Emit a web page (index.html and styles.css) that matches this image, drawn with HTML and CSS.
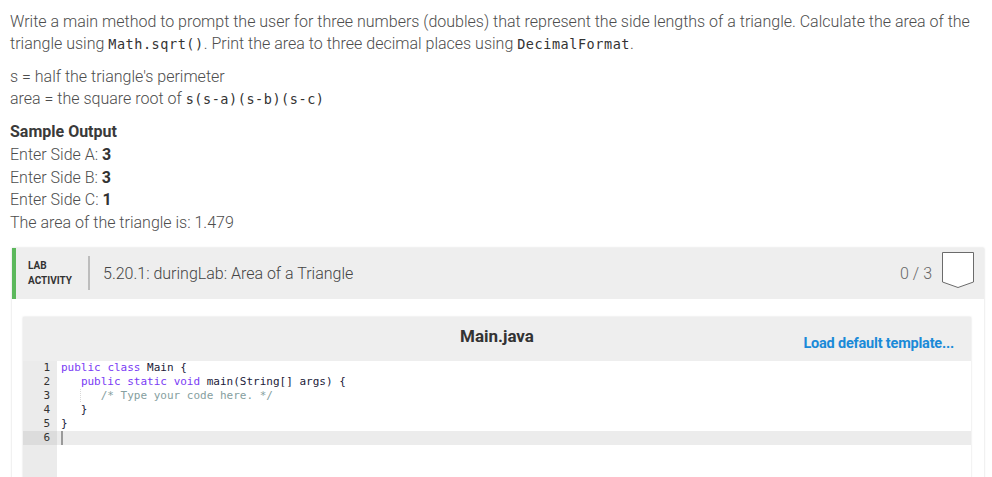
FILE: index.html
```html
<!DOCTYPE html>
<html>
<head>
<meta charset="utf-8">
<link rel="stylesheet" href="styles.css">
</head>
<body>
<div class="page">
  <p class="para">Write a main method to prompt the user for three numbers (doubles) that represent the side lengths of a triangle. Calculate the area of the triangle using <code>Math.sqrt()</code>. Print the area to three decimal places using <code>DecimalFormat</code>.</p>
  <p class="para">s = half the triangle's perimeter<br>area = the square root of <code>s(s-a)(s-b)(s-c)</code></p>
  <div class="sample">
    <div class="sample-title">Sample Output</div>
    <div>Enter Side A: <b>3</b></div>
    <div>Enter Side B: <b>3</b></div>
    <div>Enter Side C: <b>1</b></div>
    <div>The area of the triangle is: 1.479</div>
  </div>

  <div class="lab">
    <div class="lab-head">
      <div class="lab-label">LAB<br>ACTIVITY</div>
      <div class="lab-divider"></div>
      <div class="lab-title">5.20.1: duringLab: Area of a Triangle</div>
      <div class="lab-score">0 / 3</div>
      <svg class="badge" width="33" height="37" viewBox="0 0 33 37">
        <path d="M1.5 0.5 H32.5 V30 L17 35.5 L1.5 30 Z" fill="#fff" stroke="#6b6b6b" stroke-width="1"/>
      </svg>
    </div>
    <div class="lab-body">
      <div class="panel">
        <div class="panel-head">
          <div class="file-name">Main.java</div>
          <a class="load-link">Load default template...</a>
        </div>
        <div class="editor">
          <div class="gutter">
            <div class="ln">1</div>
            <div class="ln">2</div>
            <div class="ln">3</div>
            <div class="ln">4</div>
            <div class="ln">5</div>
            <div class="ln active">6</div>
          </div>
          <div class="code">
            <div class="cl"><span class="kw">public</span> <span class="kw">class</span> Main {</div>
            <div class="cl">   <span class="kw">public</span> <span class="kw">static</span> <span class="kw">void</span> main(String[] args) {</div>
            <div class="cl"><span class="guide">   </span>   <span class="cm">/* Type your code here. */</span></div>
            <div class="cl">   }</div>
            <div class="cl">}</div>
            <div class="cl active"><span class="cursor"></span></div>
          </div>
        </div>
      </div>
    </div>
  </div>
</div>
</body>
</html>
```

FILE: styles.css
```css
html, body {
  margin: 0;
  padding: 0;
  background: #fff;
}

body {
  font-family: Roboto, "Liberation Sans", sans-serif;
  font-weight: 300;
  color: #4d4d4d;
  overflow: hidden;
}

.page {
  padding: 11px 8px 0 10px;
}

.para {
  margin: 0 0 11px 0;
  font-size: 16px;
  line-height: 22px;
}

code {
  font-family: "DejaVu Sans Mono", "Liberation Mono", monospace;
  font-size: 13.5px;
  letter-spacing: 0.55px;
  line-height: 1;
  font-weight: normal;
  color: #333;
}

.sample {
  font-size: 16px;
  line-height: 22.8px;
  margin-top: 11px;
}

.sample-title {
  font-weight: 700;
  color: #3a3a3a;
}

.sample b {
  font-weight: 700;
  color: #333;
}

.lab {
  margin: 13px 0 0 2px;
  background: #fff;
  box-shadow: 0 0 2px rgba(0, 0, 0, 0.18);
}

.lab-head {
  height: 51px;
  background: #eeeeee;
  border-left: 4px solid #5cb85c;
  display: flex;
  align-items: center;
  padding-left: 12px;
  padding-right: 10px;
}

.lab-label {
  font-size: 10px;
  font-weight: 700;
  line-height: 15px;
  color: #333;
  width: 60px;
}

.lab-divider {
  width: 2px;
  height: 34px;
  background: #bdbdbd;
}

.lab-title {
  flex: 1;
  font-size: 16px;
  color: #444;
  margin-left: 13px;
}

.lab-score {
  font-size: 16px;
  color: #666;
  margin-right: 9px;
}

.badge {
  display: block;
  align-self: flex-start;
  margin-top: 4px;
}

.lab-body {
  padding: 18px 13px 0 11px;
}

.panel {
  background: #fff;
  box-shadow: 0 0 2px rgba(0, 0, 0, 0.15);
}

.panel-head {
  height: 44px;
  background: #eeeeee;
  position: relative;
  display: flex;
  align-items: center;
  justify-content: center;
}

.file-name {
  font-size: 17px;
  font-weight: 700;
  color: #333;
  margin-top: -5px;
}

.load-link {
  position: absolute;
  right: 17px;
  top: 18px;
  font-size: 14.5px;
  font-weight: 700;
  color: #1a8ad8;
  letter-spacing: -0.2px;
}

.editor {
  display: flex;
  height: 200px;
  font-family: "DejaVu Sans Mono", "Liberation Mono", monospace;
  font-size: 11px;
  line-height: 14px;
}

.gutter {
  width: 34px;
  background: #ebebeb;
  flex-shrink: 0;
}

.ln {
  height: 14px;
  text-align: right;
  padding-right: 7px;
  color: #333;
}

.ln.active {
  background: #dcdcdc;
}

.code {
  flex: 1;
}

.cl {
  height: 14px;
  white-space: pre;
  color: #1b1b3a;
  padding-left: 4px;
}

.cl.active {
  background: #ececec;
}

.kw {
  color: #7a3cf4;
}

.cm {
  color: #86a0a0;
}

.guide {
  background-image: linear-gradient(#d8d8d8 50%, transparent 50%);
  background-size: 1px 2px;
  background-repeat: repeat-y;
  background-position: 19px 0;
}

.cursor {
  display: inline-block;
  width: 2px;
  height: 14px;
  background: #9a9a9a;
  vertical-align: top;
}
```
